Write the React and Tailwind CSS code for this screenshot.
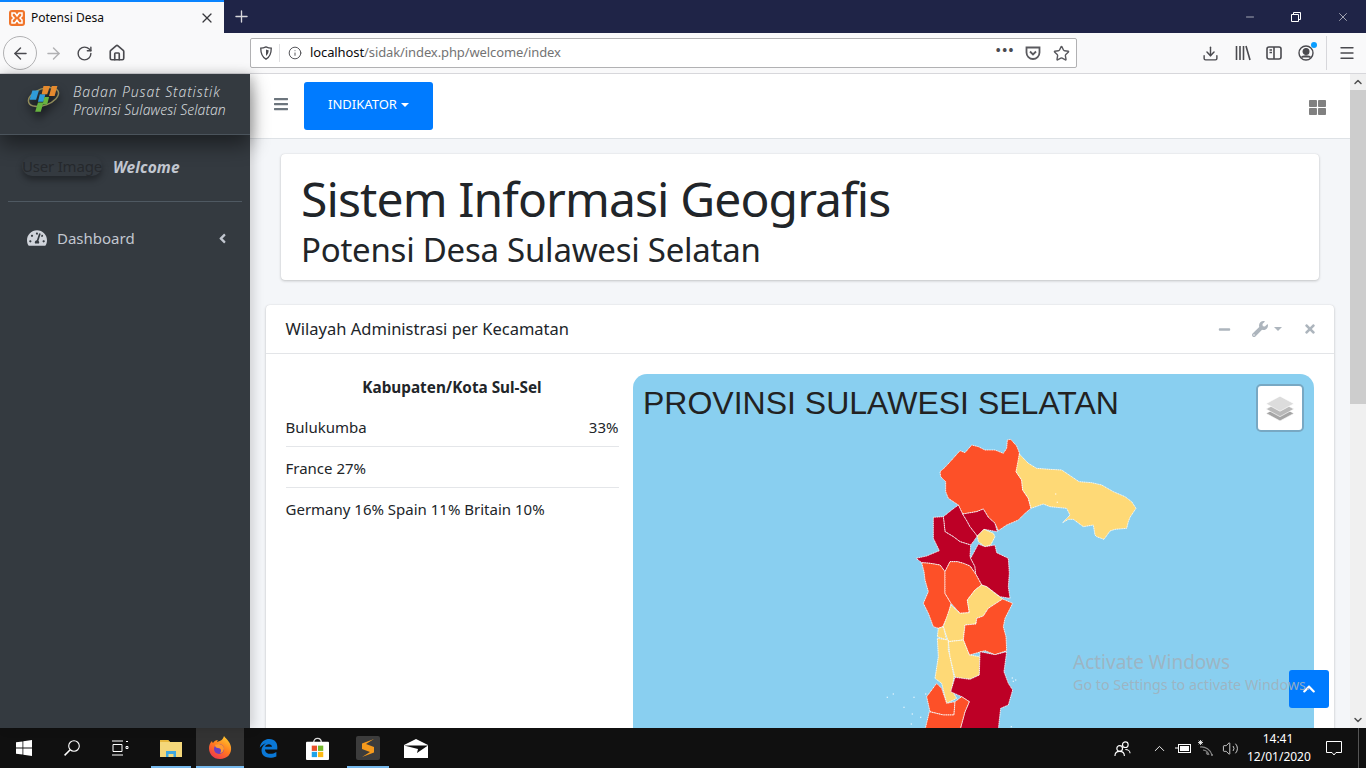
import {
  ArrowLeft, ArrowRight, RotateCw, Home, Info, Star, Download, Menu, X, Plus, Minus, Search, ChevronUp, Volume2,
} from 'lucide-react'
import { FaTachometerAlt, FaBars, FaThLarge, FaMinus, FaWrench, FaTimes, FaChevronUp, FaAngleLeft } from 'react-icons/fa'

const UI = 'font-["Noto_Sans",sans-serif]'

const RED = '#bd0026'
const ORANGE = '#fd5028'
const YELLOW = '#fed976'

// traced from the map, coordinates are 3x the on-screen pixels
const REGIONS = [
  [ORANGE, '180,125 195,112 215,90 240,62 255,68 275,45 295,50 315,60 345,60 370,70 380,55 382,30 392,28 410,48 418,68 418,100 408,125 425,150 428,180 445,205 453,235 435,250 415,270 380,285 355,302 345,280 325,262 310,237 290,245 248,252 235,225 205,205 197,185 197,155 182,140'],
  [YELLOW, '418,72 445,100 470,115 510,118 545,120 575,140 597,155 635,158 665,165 700,185 735,200 755,215 768,235 750,262 745,275 740,295 705,298 690,303 672,328 650,320 645,315 640,285 610,290 580,268 565,268 548,278 570,255 560,235 530,232 510,230 490,222 453,235 445,205 428,180 425,150 408,125'],
  [RED, '235,225 248,252 262,275 270,290 292,318 280,335 272,345 240,335 220,320 195,305 190,260 215,240'],
  [RED, '248,252 290,245 310,237 325,262 345,280 352,305 312,298 292,318 270,290 262,275'],
  [YELLOW, '292,318 312,298 340,310 345,320 332,345 315,350 295,335'],
  [RED, '160,262 190,260 195,305 220,320 240,335 272,345 270,380 285,410 287,432 270,408 250,400 232,395 210,395 195,425 180,405 150,400 125,398 108,385 140,378 178,362 160,325'],
  [RED, '295,342 315,350 345,345 350,368 385,385 388,430 385,470 390,505 360,500 320,470 305,465 287,432 285,410 272,385'],
  [ORANGE, '125,398 150,400 180,405 195,425 195,490 213,520 205,555 188,590 175,595 160,590 145,550 130,520 145,485 135,450 132,425'],
  [ORANGE, '210,395 232,395 250,400 270,408 287,432 305,465 285,480 262,510 268,548 240,550 213,520 195,490 195,425'],
  [YELLOW, '305,465 320,470 345,490 368,507 325,535 310,558 290,565 288,582 255,585 250,630 205,635 190,590 213,525 240,550 268,548 262,510 285,480'],
  [ORANGE, '368,507 398,520 375,565 370,590 378,620 380,662 345,674 315,662 268,675 250,630 255,585 288,582 290,565 310,558 325,535'],
  [YELLOW, '175,595 190,590 200,630 172,620'],
  [YELLOW, '172,625 205,630 205,660 210,680 222,740 215,780 230,805 200,820 185,760 165,745 175,680'],
  [YELLOW, '205,635 250,630 268,675 300,680 298,735 270,748 225,742 210,680'],
  [RED, '300,665 345,674 380,665 372,725 385,760 398,780 385,825 362,835 358,870 355,900 240,900 255,845 268,815 245,800 212,785 225,742 270,748 298,735'],
  [ORANGE, '170,760 185,775 200,820 225,815 222,855 190,855 150,845 140,800'],
  [ORANGE, '245,800 268,815 255,845 240,900 135,900 148,845 190,855 222,855 225,815'],
]

const SPECKS = [[395,742],[405,748],[398,752],[38,790],[20,800],[135,790],[100,800],[95,850],[92,880],[120,860],[70,830],[392,888],[525,190],[530,215]]

function SulselMap() {
  return (
    <svg viewBox="0 0 840 900" className="absolute left-[247px] top-[56px] w-[280px] h-[300px]">
      {REGIONS.map(([fill, points], i) => (
        <polygon key={i} points={points} fill={fill} stroke="#fff" strokeWidth="2.500" strokeDasharray="4 1.500" strokeLinejoin="round" />
      ))}
      {SPECKS.map(([x, y], i) => <rect key={i} x={x} y={y} width="4" height="4" fill="#fff" opacity=".7" />)}
    </svg>
  )
}

function BpsLogo() {
  return (
    <svg viewBox="0 0 40 34" className="w-[37px] h-[32px] drop-shadow-[0_6px_5px_rgba(0,0,0,.65)]">
      <ellipse cx="20" cy="17" rx="17" ry="9" fill="none" stroke="#8f8a5a" strokeWidth="1.6" transform="rotate(-20 20 17)" />
      <polygon points="8,10 15,10 12,20 5,20" fill="#2f9bd8" />
      <polygon points="16,14 22,14 20,22 14,22" fill="#2f9bd8" />
      <polygon points="20,5 27,5 24,14 18,14" fill="#e58a2e" />
      <polygon points="29,5 35,5 32,16 26,16" fill="#e58a2e" />
      <polygon points="14,23 20,23 17,33 11,33" fill="#67b33f" />
      <polygon points="21,17 26,17 24,25 19,25" fill="#67b33f" />
    </svg>
  )
}

function Xampp() {
  return (
    <svg viewBox="0 0 16 16" className="w-4 h-4">
      <rect width="16" height="16" rx="3" fill="#f0742a" />
      <path d="M3 3h3l2 3 2-3h3v3l-2 2 2 2v3h-3l-2-3-2 3H3v-3l2-2-2-2z" fill="none" stroke="#fff" strokeWidth="1.5" />
    </svg>
  )
}

function Firefox() {
  return (
    <svg viewBox="0 0 24 24" className="w-[24px] h-[24px]">
      <defs>
        <linearGradient id="ff" x1="0.8" y1="0" x2="0.2" y2="1">
          <stop offset="0" stopColor="#ffcb2e" />
          <stop offset="0.5" stopColor="#ff7a1f" />
          <stop offset="1" stopColor="#f0324f" />
        </linearGradient>
      </defs>
      <path d="M16 0c1 2 6 5 7 11 1 7-4 12-11 12S1 18 1 12c0-3 1-5 3-7 0 1 1 2 1 2 1-2 3-3 5-3-1 1-1 2-1 2 3-1 6-2 7-6z" fill="url(#ff)" />
      <circle cx="11" cy="13" r="5" fill="#6a3fc0" />
      <path d="M7 9c3-2 8-1 9 3 0 3-2 5-4 5 2-2 1-5-2-5-2 0-3-1-3-3z" fill="#ff9a2e" />
    </svg>
  )
}

function Taskbar() {
  return (
    <footer className="h-[40px] shrink-0 bg-[#101010] flex items-stretch text-white relative">
      <TaskSlot w="w-[48px]">
        <svg viewBox="0 0 16 16" className="w-4 h-4" fill="#fff"><path d="M0 2.300 6.500 1.400v6.200H0zM7.300 1.300 16 0v7.600H7.300zM0 8.400h6.500v6.200L0 13.700zM7.300 8.400H16V16l-8.700-1.300z" /></svg>
      </TaskSlot>
      <TaskSlot w="w-[48px]">
        <svg viewBox="0 0 16 16" className="w-[16px] h-[16px]" fill="none" stroke="#fff" strokeWidth="1.100"><circle cx="10" cy="6" r="5.300" /><path d="M6.200 9.800.6 15.400" strokeWidth="1.500" /></svg>
      </TaskSlot>
      <TaskSlot w="w-[48px]">
        <svg viewBox="0 0 17 16" className="w-[17px] h-[16px]" fill="none" stroke="#fff"><path d="M0 1h11M0 15h11M1 4.500h9v7H1zM14 1.500h2M14 6.500h2v2h-2z" /></svg>
      </TaskSlot>
      <TaskSlot w="w-[50px] ml-[2px]" active="mx-[5px]">
        <svg viewBox="0 0 22 18" className="w-[22px] h-[18px]"><path d="M0 1h8l2 2h12v15H0z" fill="#f4d77a" /><path d="M0 1h8l2 2H0z" fill="#e8b93f" /><path d="M6 12h10v6h-2.500v-3h-5v3H6z" fill="#3fa7e0" /></svg>
      </TaskSlot>
      <TaskSlot w="w-[48px] bg-[#333]" active="">
        <Firefox />
      </TaskSlot>
      <TaskSlot w="w-[48px]">
        <svg viewBox="0 0 24 24" className="w-[21px] h-[21px]"><path d="M2 11C3 4 8 1 13 1c6 0 10 4 9 12H8c0 5 7 7 13 3v5c-7 3-17 2-17-7 0-3 2-6 5-8-3 1-5 3-7 5zm6-1h8c0-4-7-4-8 0z" fill="#0a78d7" /></svg>
      </TaskSlot>
      <TaskSlot w="w-[49px] ml-[1px]">
        <svg viewBox="0 0 24 24" className="w-[23px] h-[23px]"><path d="M8 6c0-6 8-6 8 0" fill="none" stroke="#ddd" strokeWidth="1.400" /><rect y="5" width="24" height="19" rx="1" fill="#fff" /><rect x="6" y="9" width="5.500" height="5.500" fill="#e8502a" /><rect x="12.500" y="9" width="5.500" height="5.500" fill="#74b72a" /><rect x="6" y="15.500" width="5.500" height="5.500" fill="#1fa3e8" /><rect x="12.500" y="15.500" width="5.500" height="5.500" fill="#fdb913" /></svg>
      </TaskSlot>
      <TaskSlot w="w-[50px] ml-[1px]" active="mx-[4px]">
        <svg viewBox="0 0 24 24" className="w-[24px] h-[24px]"><rect width="24" height="24" rx="2" fill="#3c3c3c" /><path d="M18 3 6 7.500v5.500l8 3-8 5 12-4.500V11L10 8l8-5z" fill="#f59a1c" /></svg>
      </TaskSlot>
      <TaskSlot w="w-[48px] -ml-[1px]">
        <svg viewBox="0 0 24 19" className="w-[24px] h-[19px]"><path d="M0 6 12 0l12 6v13H0z" fill="#fff" /><path d="M0 6.500h24L13 14l1-4z" fill="#101010" /></svg>
      </TaskSlot>

      <div className="flex-1" />

      <div className="flex items-center shrink-0">
        <svg viewBox="0 0 18 18" className="w-[17px] h-[17px] mr-[20px]" fill="none" stroke="#fff" strokeWidth="1.200"><circle cx="12" cy="5" r="3" /><circle cx="6" cy="9" r="3" /><path d="M1 17c0-3 2-5 5-5s5 2 5 5M12 10c3 0 5 2 5 4" /></svg>
        <ChevronUp className="w-[17px] h-[17px] mr-[7px]" strokeWidth={1.3} />
        <svg viewBox="0 0 16 12" className="w-[16px] h-[12px] mr-[7px]" fill="none" stroke="#fff"><rect x="3.500" y="2.500" width="12" height="8" /><rect x="5" y="4" width="9" height="5" fill="#fff" stroke="none" /><path d="M0 6h4" /></svg>
        <svg viewBox="0 0 16 16" className="w-[16px] h-[16px] mr-[8px]" fill="none">
          <path d="M2 7A11 11 0 0 1 14 15M5 10A7 7 0 0 1 11 15M8 12.500A3.500 3.500 0 0 1 9.500 15" stroke="#8a8a8a" strokeWidth="1.100" />
          <circle cx="14" cy="15" r="1" fill="#8a8a8a" />
          <path d="M2.500 0v5M0 2.500h5M.7.700l3.600 3.600M4.300.700.7 4.300" stroke="#fff" strokeWidth=".8" />
        </svg>
        <Volume2 className="w-[17px] h-[17px] mr-[8px]" strokeWidth={1.1} />
        <div className={`w-[62px] text-center text-[12px] leading-[18px] ${UI}`}>
          <div>14:41</div>
          <div>12/01/2020</div>
        </div>
        <div className="w-[49px] flex justify-center">
          <svg viewBox="0 0 16 15" className="w-[16px] h-[15px]" fill="none" stroke="#fff"><path d="M.5.500h15v11H10l-2 2.500-2-2.500H.5z" /></svg>
        </div>
        <div className="w-[8px] h-full border-l border-[#555]" />
      </div>
    </footer>
  )
}

function TaskSlot({ w, active, children }) {
  return (
    <div className={`relative h-full flex items-center justify-center shrink-0 ${w}`}>
      {children}
      {active !== undefined && <div className={`absolute left-0 right-0 bottom-0 h-[2px] bg-[#76b9ed] ${active}`} />}
    </div>
  )
}

function Sidebar() {
  return (
    <aside className={`w-[250px] shrink-0 bg-[#343a40] text-[#c2c7d0] relative z-10 shadow-[4px_0_10px_rgba(0,0,0,.15)] ${UI}`}>
      <div className="h-[61px] relative z-10 flex items-start pl-[25px] pt-[7px] border-b border-[#4b545c] shadow-[0_10px_20px_rgba(0,0,0,.45)]">
        <BpsLogo />
        <div className="ml-[11px] italic font-light text-[14px] leading-[18.500px] pt-[1.500px] text-[#d2d6da]">
          <div className="tracking-[.9px]">Badan Pusat Statistik</div>
          <div className="tracking-[.05px]">Provinsi Sulawesi Selatan</div>
        </div>
      </div>
      <div className="mx-[8px] h-[67px] border-b border-[#4f5962] flex items-center pl-[14px] pb-[1px]">
        <span className="text-[#26292d] text-[15px] leading-[20px] -mt-[3px] tracking-[-.2px] rounded-full shadow-[0_4px_6px_rgba(0,0,0,.35)]">User Image</span>
        <span className="ml-[11px] font-bold italic text-[15.500px] tracking-[.1px]">Welcome</span>
      </div>
      <div className="mt-[25px] pl-[27px] pr-[21px] flex items-center text-[15px]">
        <FaTachometerAlt className="w-[20px] h-[18px] text-[#d0d4db]" />
        <span className="ml-[10px] flex-1">Dashboard</span>
        <FaAngleLeft className="w-[13px] h-[15px]" />
      </div>
    </aside>
  )
}

function LayersIcon() {
  return (
    <svg viewBox="0 0 26 26" className="w-[28px] h-[28px]">
      <polygon points="13,11 26,18 13,25 0,18" fill="#a5a5a5" stroke="#fff" strokeWidth=".6" />
      <polygon points="13,7 26,14 13,21 0,14" fill="#b9b9b9" stroke="#fff" strokeWidth=".6" />
      <polygon points="13,2 26,9 13,16 0,9" fill="#dcdcdc" stroke="#fff" strokeWidth=".6" />
    </svg>
  )
}

function Content() {
  return (
    <main className={`flex-1 bg-[#f4f6f9] relative overflow-hidden text-[#212529] ${UI}`}>
      <nav className="h-[65px] bg-white border-b border-[#dee2e6] flex items-center pl-[24px] pr-[24px]">
        <FaBars className="w-[14px] h-[16px] text-[#6c757d] -mt-[4px]" />
        <button className="ml-[16px] w-[129px] h-[48px] mt-[-1px] bg-[#007bff] text-white text-[13px] rounded-[3px] flex items-center justify-center pb-[1px]">
          INDIKATOR
          <span className="ml-[4px] border-x-[4px] border-x-transparent border-t-[4px] border-t-white" />
        </button>
        <div className="flex-1" />
        <FaThLarge className="w-[17px] h-[17px] text-[#808080] mt-[2px]" />
      </nav>

      <div className="mx-[31px] mt-[15px] h-[126px] bg-white rounded-[4px] shadow-[0_0_1px_rgba(0,0,0,.13),0_1px_3px_rgba(0,0,0,.2)] px-[20px] pt-[15px]">
        <h1 className="text-[48px] leading-[60px] tracking-[-.9px]">Sistem Informasi Geografis</h1>
        <h2 className="text-[33px] leading-[40px] mt-[1px] tracking-[-.25px]">Potensi Desa Sulawesi Selatan</h2>
      </div>

      <section className="mx-[16px] mt-[25px] bg-white rounded-[4px] shadow-[0_0_1px_rgba(0,0,0,.13),0_1px_3px_rgba(0,0,0,.2)]">
        <header className="h-[49px] border-b border-[#e3e5e8] pl-[19.500px] pr-[18px] flex items-center">
          <span className="flex-1 text-[16.500px]">Wilayah Administrasi per Kecamatan</span>
          <FaMinus className="w-[13px] h-[13px] text-[#adb5bd]" />
          <FaWrench className="ml-[21px] w-[16px] h-[16px] text-[#adb5bd]" />
          <span className="ml-[6px] border-x-[4px] border-x-transparent border-t-[4px] border-t-[#adb5bd]" />
          <FaTimes className="ml-[22px] w-[12px] h-[14px] text-[#adb5bd]" />
        </header>
        <div className="flex pl-[19.500px] pr-[20px] pt-[20px] gap-[14.500px]">
          <div className="w-[333px] shrink-0 text-[15px]">
            <p className="text-center font-bold text-[15.300px] leading-[28px] -mt-[1px]">Kabupaten/Kota Sul-Sel</p>
            <div className="flex justify-between mt-[5px] h-[41px] pt-[10px] border-b border-[#e4e6e9]"><span>Bulukumba</span><span>33%</span></div>
            <div className="h-[41px] pt-[10px] border-b border-[#e4e6e9]">France 27%</div>
            <div className="pt-[10px]">Germany 16% Spain 11% Britain 10%</div>
          </div>
          <div className="relative flex-1 h-[640px] bg-[#89cff0] rounded-[14px] overflow-hidden">
            <div className='absolute left-[10px] top-[6px] text-[32px] leading-[46px] text-[#222] font-["Liberation_Sans",sans-serif]'>PROVINSI SULAWESI SELATAN</div>
            <div className="absolute right-[10px] top-[10px] w-[48px] h-[48px] bg-white border-2 border-[#78a8c3] rounded-[5px] flex items-center justify-center">
              <LayersIcon />
            </div>
            <SulselMap />
          </div>
        </div>
      </section>

      <button className="absolute left-[1039px] top-[596px] w-[40px] h-[38px] bg-[#007bff] rounded-[3px] text-white flex items-center justify-center">
        <FaChevronUp className="w-[14px] h-[14px]" />
      </button>

      <div className="absolute left-[823px] top-[576px] text-[#9fb2be]/90 pointer-events-none">
        <div className="text-[19px] leading-[25px]">Activate Windows</div>
        <div className="text-[14.300px] leading-[20px] whitespace-nowrap">Go to Settings to activate Windows.</div>
      </div>
    </main>
  )
}

function PageScrollbar() {
  return (
    <div className="w-[16px] shrink-0 bg-[#f0f0f0] flex flex-col items-center relative z-20">
      <ChevronUp className="w-[12px] h-[16px] text-[#505050] shrink-0" strokeWidth={3} />
      <div className="w-full h-[314px] bg-[#cdcdcd]" />
      <div className="flex-1" />
      <ChevronUp className="w-[12px] h-[16px] text-[#505050] rotate-180 shrink-0" strokeWidth={3} />
    </div>
  )
}

function BrowserBar() {
  return (
    <>
      <div className={`h-[33px] shrink-0 bg-[#1f2447] flex text-white ${UI}`}>
        <div className="w-[224px] bg-[#f9f9fa] border-t-2 border-[#0a84ff] flex items-center pl-[9px] pr-[9px]">
          <Xampp />
          <span className="ml-[6px] flex-1 text-[12px] text-[#0c0c0d]">Potensi Desa</span>
          <X className="w-[16px] h-[16px] text-[#38383d]" strokeWidth={1.8} />
        </div>
        <div className="w-[34px] flex items-center justify-center"><Plus className="w-[19px] h-[19px] text-[#d7d7db]" strokeWidth={1.7} /></div>
        <div className="flex-1" />
        <div className="w-[46px] flex items-center justify-center"><Minus className="w-[12px] h-[12px]" strokeWidth={1.2} /></div>
        <div className="w-[46px] flex items-center justify-center">
          <svg viewBox="0 0 10 10" className="w-[10px] h-[10px]" fill="none" stroke="#fff"><path d="M.5 2.500h7v7h-7zM2.500 2.500v-2h7v7h-2" /></svg>
        </div>
        <div className="w-[47px] flex items-center justify-center"><X className="w-[14px] h-[14px]" strokeWidth={1} /></div>
      </div>

      <div className={`h-[41px] shrink-0 bg-[#f9f9fa] border-b border-[#d7d7db] flex items-center text-[#4a4a4f] ${UI}`}>
        <div className="ml-[3px] w-[34px] h-[34px] rounded-full border border-[#b1b1b3] flex items-center justify-center"><ArrowLeft className="w-[19px] h-[19px]" strokeWidth={1.8} /></div>
        <ArrowRight className="ml-[7px] w-[19px] h-[19px] text-[#b1b1b3]" strokeWidth={1.8} />
        <RotateCw className="ml-[13px] w-[17px] h-[17px]" strokeWidth={2} />
        <Home className="ml-[15px] w-[18px] h-[18px]" strokeWidth={2.2} />
        <div className="ml-[124px] w-[827px] h-[30px] bg-white border border-[#b1b1b3] rounded-[2px] flex items-center pl-[8px] pr-[6px] text-[13px] shrink-0">
          <svg viewBox="0 0 16 16" className="w-[14px] h-[14px]" fill="none" stroke="#4a4a4f" strokeWidth="1.500"><path d="M8 1c2 1 4 1.500 6 1.500 0 6-1.500 10-6 12.500C3.500 12.500 2 8.500 2 2.500 4 2.500 6 2 8 1z" /><path d="M8 4c1 .5 2 .7 3 .8 0 3-1 5-3 6.500z" fill="#4a4a4f" stroke="none" /></svg>
          <div className="mx-[6px] w-px h-[18px] bg-[#e0e0e2]" />
          <Info className="ml-[2px] w-[14px] h-[14px]" strokeWidth={1.6} />
          <span className="ml-[8px] flex-1 tracking-[-.1px]"><span className="text-[#0c0c0d]">localhost</span><span className="text-[#737373]">/sidak/index.php/welcome/index</span></span>
          <span className="tracking-[1.500px] font-bold text-[13px] leading-none -mt-[6px]">•••</span>
          <svg viewBox="0 0 16 16" className="ml-[10px] w-[16px] h-[16px]" fill="none" stroke="#5a5a5f" strokeWidth="1.800"><path d="M1.500 2.500h13v5a6.500 6.500 0 0 1-13 0z" /><path d="M5 6.500l3 3 3-3" /></svg>
          <Star className="ml-[12px] w-[17px] h-[17px] text-[#5a5a5f]" strokeWidth={2} />
        </div>
        <div className="flex-1" />
        <Download className="w-[17px] h-[17px]" strokeWidth={2} />
        <svg viewBox="0 0 16 16" className="ml-[16px] w-[16px] h-[16px]" fill="none" stroke="#4a4a4f" strokeWidth="1.600"><path d="M1.500 1v14M5 1v14M8.500 1v14M11 1l4 14" /></svg>
        <svg viewBox="0 0 16 16" className="ml-[15px] w-[16px] h-[16px]" fill="none" stroke="#4a4a4f" strokeWidth="1.600"><rect x="1" y="2" width="14" height="12" rx="2" /><path d="M8 2v12M3.500 5H6M3.500 7.500H6" /></svg>
        <div className="relative ml-[16px]">
          <svg viewBox="0 0 16 16" className="w-[16px] h-[16px]" fill="none" stroke="#4a4a4f" strokeWidth="1.400"><circle cx="8" cy="8" r="7" /><circle cx="8" cy="6.500" r="2.800" fill="#4a4a4f" /><path d="M3.500 12.500c1-2 8-2 9 0" fill="#4a4a4f" /></svg>
          <div className="absolute -right-[3px] -top-[3px] w-[6px] h-[6px] rounded-full bg-[#0a9dff]" />
        </div>
        <div className="ml-[12px] w-px h-[34px] bg-[#d7d7db]" />
        <Menu className="ml-[11px] mr-[10px] w-[18px] h-[18px]" strokeWidth={1.8} />
      </div>
    </>
  )
}

export default function App() {
  return (
    <div className="h-screen w-full flex flex-col overflow-hidden">
      <BrowserBar />
      <div className="flex-1 flex min-h-0">
        <Sidebar />
        <Content />
        <PageScrollbar />
      </div>
      <Taskbar />
    </div>
  )
}
